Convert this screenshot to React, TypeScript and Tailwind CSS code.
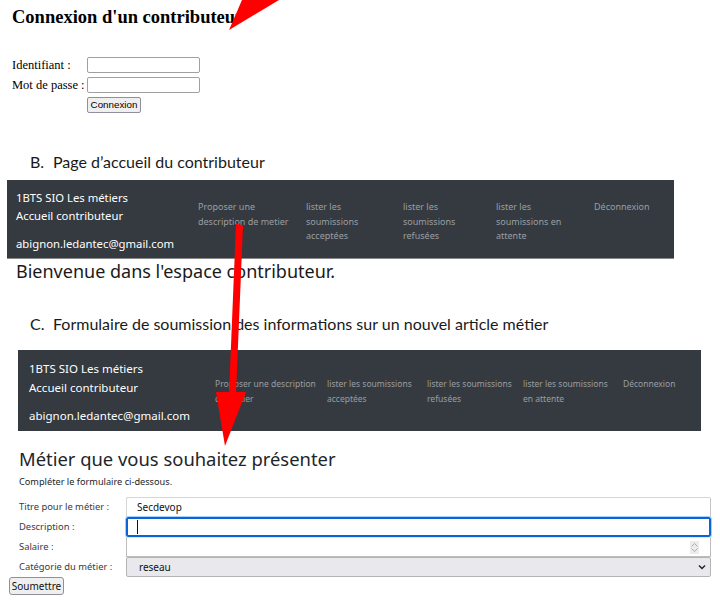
import React from "react";

const serif = { fontFamily: '"Liberation Serif", "Times New Roman", serif' };
const doc = { fontFamily: 'Lato, "Noto Sans", sans-serif' };
const ui = { fontFamily: '"Noto Sans", "Open Sans", sans-serif' };

function NavLink({ lines, small }: { lines: string[]; small?: boolean }) {
  return (
    <div
      className={`flex flex-col leading-[14.5px] text-[#9b9ea2] ${small ? "text-[8.5px]" : "text-[9px]"}`}
    >
      {lines.map((l, i) => (
        <span key={i} className="whitespace-nowrap">
          {l}
        </span>
      ))}
    </div>
  );
}

export default function App() {
  return (
    <div className="relative w-[720px] h-[612px] overflow-hidden bg-white text-black">
      {/* Section A */}
      <div style={serif} className="pl-[12px] pt-[6px]">
        <h2 className="text-[18.5px] font-bold leading-[22px]">Connexion d'un contributeur</h2>
        <div className="mt-[29px] flex flex-col gap-[4px] text-[12.5px]">
          <div className="flex items-center h-[16px]">
            <span className="w-[75px]">Identifiant :</span>
            <div className="w-[113px] h-[16px] border border-[#a0a0a0] rounded-[2px] bg-white" />
          </div>
          <div className="flex items-center h-[16px]">
            <span className="w-[75px]">Mot de passe :</span>
            <div className="w-[113px] h-[16px] border border-[#a0a0a0] rounded-[2px] bg-white" />
          </div>
          <div className="flex items-center h-[16px]">
            <span className="w-[75px]" />
            <button
              style={{ fontFamily: '"Liberation Sans", Arial, sans-serif' }}
              className="h-[16px] w-[54px] text-[9.8px] leading-[14px] border border-[#8f8f9d] rounded-[2px] bg-[#efefef]"
            >
              Connexion
            </button>
          </div>
        </div>
      </div>

      {/* Section B */}
      <div style={doc} className="mt-[40px] pl-[30px] flex text-[16px] leading-[18px] text-[#1a1a1a]">
        <span className="w-[23px]">B.</span>
        <span>Page d’accueil du contributeur</span>
      </div>
      <div
        style={ui}
        className="ml-[7px] mt-[9px] w-[667px] h-[79px] pl-[9px] pt-[9px] bg-[#343a40] border-b border-[#8a8a8a] flex"
      >
        <div className="w-[182px] flex flex-col text-white text-[11.3px] leading-[18px]">
          <span>1BTS SIO Les métiers</span>
          <span>Accueil contributeur</span>
          <span className="mt-[10px]">abignon.ledantec@gmail.com</span>
        </div>
        <div className="w-[108px] pt-[11px]">
          <NavLink lines={["Proposer une", "description de metier"]} />
        </div>
        <div className="w-[97px] pt-[11px]">
          <NavLink lines={["lister les", "soumissions", "acceptées"]} />
        </div>
        <div className="w-[93px] pt-[11px]">
          <NavLink lines={["lister les", "soumissions", "refusées"]} />
        </div>
        <div className="w-[98px] pt-[11px]">
          <NavLink lines={["lister les", "soumissions en", "attente"]} />
        </div>
        <div className="pt-[11px]">
          <NavLink lines={["Déconnexion"]} />
        </div>
      </div>

      <div style={ui} className="pl-[16px] text-[18px] leading-[24px] text-[#1a1a1a]">
        Bienvenue dans l'espace contributeur.
      </div>

      {/* Section C */}
      <div style={doc} className="mt-[32px] pl-[30px] flex text-[16px] leading-[18px] text-[#1a1a1a]">
        <span className="w-[23px]">C.</span>
        <span>Formulaire de soumission des informations sur un nouvel article métier</span>
      </div>

      <div style={ui} className="ml-[18px] mt-[17px] w-[683px] h-[81px] pl-[11px] pt-[9px] bg-[#343a40] flex">
        <div className="w-[186px] flex flex-col text-white text-[11.5px] leading-[19px]">
          <span>1BTS SIO Les métiers</span>
          <span>Accueil contributeur</span>
          <span className="mt-[9px]">abignon.ledantec@gmail.com</span>
        </div>
        <div className="w-[112px] pt-[18px]">
          <NavLink small lines={["Proposer une description", "de metier"]} />
        </div>
        <div className="w-[100px] pt-[18px]">
          <NavLink small lines={["lister les soumissions", "acceptées"]} />
        </div>
        <div className="w-[96px] pt-[18px]">
          <NavLink small lines={["lister les soumissions", "refusées"]} />
        </div>
        <div className="w-[100px] pt-[18px]">
          <NavLink small lines={["lister les soumissions", "en attente"]} />
        </div>
        <div className="pt-[18px]">
          <NavLink small lines={["Déconnexion"]} />
        </div>
      </div>

      <div style={ui} className="pl-[19px] text-[#212529]">
        <h1 className="text-[18.4px] leading-[24px] mt-[16px]">Métier que vous souhaitez présenter</h1>
        <p className="text-[9.2px] leading-[14px] mt-[4px]">Compléter le formulaire ci-dessous.</p>
        <div className="mt-[8px] flex flex-col text-[9.4px] text-[#3a3a3a]">
          <div className="flex h-[20px]">
            <span className="w-[107px] pt-[3px]">Titre pour le métier :</span>
            <div className="w-[585px] h-[20px] border border-[#d6d6d6] border-r-[#c4c4c4] rounded-t-[2px] flex items-center pl-[10px] text-[10px] text-[#111]">
              Secdevop
            </div>
          </div>
          <div className="flex h-[20px]">
            <span className="w-[107px] pt-[3px]">Description :</span>
            <div className="w-[585px] h-[20px] border-2 border-[#0a64d8] rounded-[2px] outline outline-1 outline-[#a9d0f5] flex items-center pl-[9px]">
              <div className="w-px h-[14px] bg-[#111]" />
            </div>
          </div>
          <div className="flex h-[20px]">
            <span className="w-[107px] pt-[3px]">Salaire :</span>
            <div className="w-[585px] h-[20px] border border-[#bdbdbd] border-t-[#e4e4e4] flex items-center justify-end pr-[11px]">
              <div className="w-[9px] h-[13px] bg-[#ececec] flex flex-col items-center justify-center gap-[1px]">
                <svg width="7" height="4" viewBox="0 0 7 4">
                  <path d="M0.5 3.5 L3.5 0.5 L6.5 3.5" fill="none" stroke="#9a9a9a" strokeWidth="0.8" />
                </svg>
                <svg width="7" height="4" viewBox="0 0 7 4">
                  <path d="M0.5 0.5 L3.5 3.5 L6.5 0.5" fill="none" stroke="#9a9a9a" strokeWidth="0.8" />
                </svg>
              </div>
            </div>
          </div>
          <div className="flex h-[20px]">
            <span className="w-[107px] pt-[3px]">Catégorie du métier :</span>
            <div className="w-[585px] h-[20px] border border-[#b4b4b8] rounded-[2px] bg-[#e9e9ed] flex items-center justify-between pl-[12px] pr-[4px] text-[10px] text-[#111]">
              <span>reseau</span>
              <svg width="8" height="6" viewBox="0 0 8 6">
                <path d="M1 1.5 L4 4.5 L7 1.5" fill="none" stroke="#222" strokeWidth="1.4" />
              </svg>
            </div>
          </div>
        </div>
      </div>
      <div style={ui} className="pl-[9px] flex">
        <button className="w-[55px] h-[18px] border border-[#8f8f9d] rounded-[3px] bg-[#efefef] text-[10px] leading-[16px] text-[#111]">
          Soumettre
        </button>
      </div>

      {/* Red annotation arrows */}
      <svg className="absolute left-0 top-0 pointer-events-none" width="720" height="612" viewBox="0 0 720 612">
        <polygon points="242,0 279,0 229,30" fill="#ff0000" />
        <polygon points="236,224 243,225 236,394 229,394" fill="#ff0000" />
        <polygon points="216,392 246,392 225,446" fill="#ff0000" />
      </svg>
    </div>
  );
}
